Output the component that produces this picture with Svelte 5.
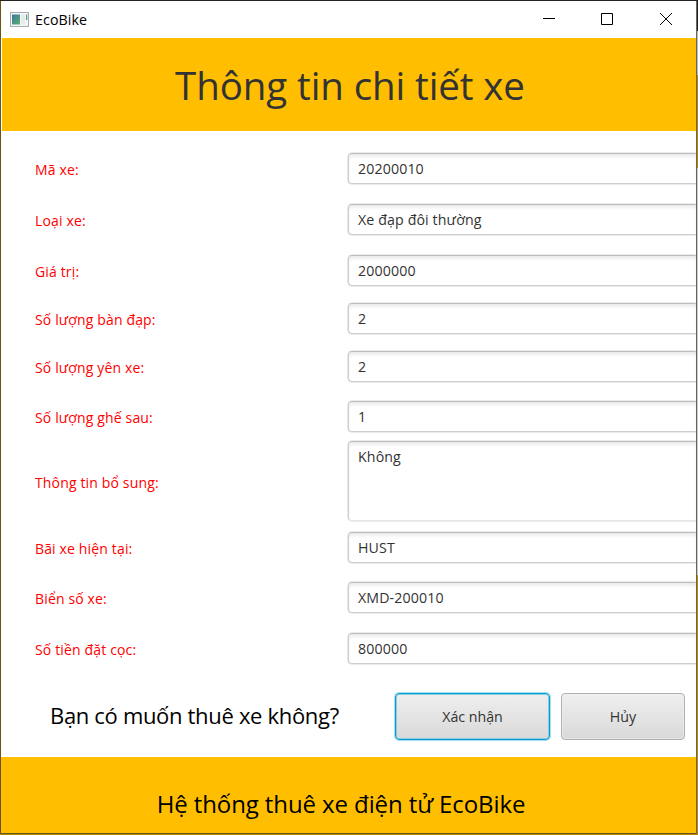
<script>
  const fields = [
    { label: 'Mã xe:', value: '20200010', gap: 22 },
    { label: 'Loại xe:', value: 'Xe đạp đôi thường', gap: 20 },
    { label: 'Giá trị:', value: '2000000', gap: 20 },
    { label: 'Số lượng bàn đạp:', value: '2', gap: 17 },
    { label: 'Số lượng yên xe:', value: '2', gap: 17 },
    { label: 'Số lượng ghế sau:', value: '1', gap: 19 },
    { label: 'Thông tin bổ sung:', value: 'Không', gap: 9, area: true },
    { label: 'Bãi xe hiện tại:', value: 'HUST', gap: 11 },
    { label: 'Biển số xe:', value: 'XMD-200010', gap: 19 },
    { label: 'Số tiền đặt cọc:', value: '800000', gap: 20 }
  ];
</script>

<div class="desktop">
  <div class="window">
    <div class="titlebar">
      <svg class="app-icon" width="20" height="16" viewBox="0 0 20 16">
        <defs>
          <linearGradient id="pane" x1="0" y1="0" x2="1" y2="1">
            <stop offset="0" stop-color="#3f78a0" />
            <stop offset="1" stop-color="#58b06c" />
          </linearGradient>
        </defs>
        <rect x="0.5" y="1.5" width="18" height="14" fill="#f4f5f6" stroke="#a9acb3" />
        <rect x="2" y="3.5" width="8" height="10" fill="url(#pane)" />
        <rect x="11" y="3.5" width="4" height="10" fill="#e6eaed" />
        <rect x="16" y="3.5" width="1.3" height="5.5" fill="#56a486" />
      </svg>
      <span class="app-name">EcoBike</span>
      <div class="controls">
        <svg width="12" height="12" viewBox="0 0 12 12"><path d="M0 5.5H12" /></svg>
        <svg width="12" height="12" viewBox="0 0 12 12"><path d="M.5 .5H11.5V11.5H.5Z" /></svg>
        <svg class="close" width="12" height="12" viewBox="0 0 12 12"><path d="M0 0L12 12M12 0L0 12" /></svg>
      </div>
    </div>
    <header><h1>Thông tin chi tiết xe</h1></header>
    <main>
      {#each fields as field}
        <div class="row" class:tall={field.area} style="margin-top: {field.gap}px">
          <span class="label">{field.label}</span>
          <div class="field">{field.value}</div>
        </div>
      {/each}
    </main>
    <section class="confirm">
      <p>Bạn có muốn thuê xe không?</p>
      <button class="primary">Xác nhận</button>
      <button class="cancel">Hủy</button>
    </section>
    <footer>Hệ thống thuê xe điện tử EcoBike</footer>
  </div>
</div>

<style>
  .desktop {
    box-sizing: border-box;
    width: 698px;
    height: 835px;
    padding: 1px 1px 1px 0;
    overflow: hidden;
    font-family: 'Open Sans', 'Noto Sans', sans-serif;
    background:
      linear-gradient(#b98a00, #b98a00) 0 834px / 698px 1px no-repeat,
      linear-gradient(#231f20 0 31px, #b8b8b8 31px 75px, #b48600 75px 168px, #c8c8c8 168px 575px, #b98a00 575px) 697px 0 / 1px 835px no-repeat,
      #242125;
  }
  .window {
    box-sizing: border-box;
    width: 697px;
    height: 833px;
    display: flex;
    flex-direction: column;
    border: solid #6a5218;
    border-width: 0 1px 1px;
    border-right-color: #6b665c;
    background: #fff;
  }
  .titlebar {
    height: 37px;
    flex: none;
    display: flex;
    align-items: center;
    padding: 0 24px 0 9px;
  }
  .app-icon { margin-top: -2px; }
  .app-name {
    margin-left: 5px;
    font-size: 14.2px;
    letter-spacing: 0.1px;
    color: #000;
  }
  .controls {
    margin: -1px 0 0 auto;
    display: flex;
    gap: 46px;
    fill: none;
    stroke: #000;
  }
  .controls svg { display: block; }
  .controls .close { margin-left: 1px; }
  header {
    height: 93px;
    flex: none;
    margin-left: 1px;
    padding-left: 2px;
    box-sizing: border-box;
    background: #ffbf00;
    text-align: center;
  }
  h1 {
    margin: 0;
    line-height: 95px;
    font-size: 38.5px;
    font-weight: 400;
    letter-spacing: -0.1px;
    color: #333;
    white-space: nowrap;
  }
  main { height: 562px; flex: none; }
  .row {
    display: flex;
    align-items: center;
    height: 31px;
    padding-left: 34px;
  }
  .label {
    width: 312px;
    flex: none;
    padding-top: 2px;
    font-size: 14px;
    letter-spacing: 0.15px;
    color: #f00;
    white-space: nowrap;
  }
  .field {
    box-sizing: border-box;
    flex: 1;
    margin-left: 1px;
    height: 31px;
    padding-left: 9px;
    border: 1px solid #cecece;
    border-top-color: #bdbdbd;
    border-right: 0;
    border-radius: 4px 1px 1px 4px;
    line-height: 29px;
    font-size: 14.2px;
    letter-spacing: 0.12px;
    color: #333;
    box-shadow: inset 0 4px 4px -2px #e5e5e5, 0 0 0 0.6px #d8d8d8;
    clip-path: inset(-1px 0 -1px -1px);
  }
  .tall, .tall .field { height: 80px; }
  .tall .field { border-bottom-color: #e6e6e6; }
  .confirm {
    height: 64px;
    flex: none;
    display: flex;
    align-items: flex-start;
    padding: 0 11px 0 49px;
  }
  p {
    width: 345px;
    flex: none;
    margin: 0;
    line-height: 45px;
    font-size: 22px;
    letter-spacing: -0.32px;
    color: #000;
    white-space: nowrap;
  }
  button {
    box-sizing: border-box;
    flex: none;
    height: 47px;
    padding: 0 0 1px;
    border: 1px solid #b0b0b0;
    border-radius: 4px;
    background: linear-gradient(#efefef, #d9d9d9);
    box-shadow: inset 0 0 0 1px #f1f1f188;
    font: 14.2px 'Open Sans', 'Noto Sans', sans-serif;
    letter-spacing: 0;
    color: #333;
  }
  .primary {
    width: 155px;
    border-color: #089bcf;
    box-shadow: 0 0 0 1px #a9dff0, inset 0 0 0 1px #8bcce2;
  }
  .cancel { width: 124px; margin-left: 11px; }
  footer {
    flex: 1;
    background: #ffbf00;
    padding-right: 15px;
    line-height: 94px;
    font-size: 24px;
    letter-spacing: -0.1px;
    text-align: center;
    color: #000;
    white-space: nowrap;
    overflow: hidden;
  }
</style>
